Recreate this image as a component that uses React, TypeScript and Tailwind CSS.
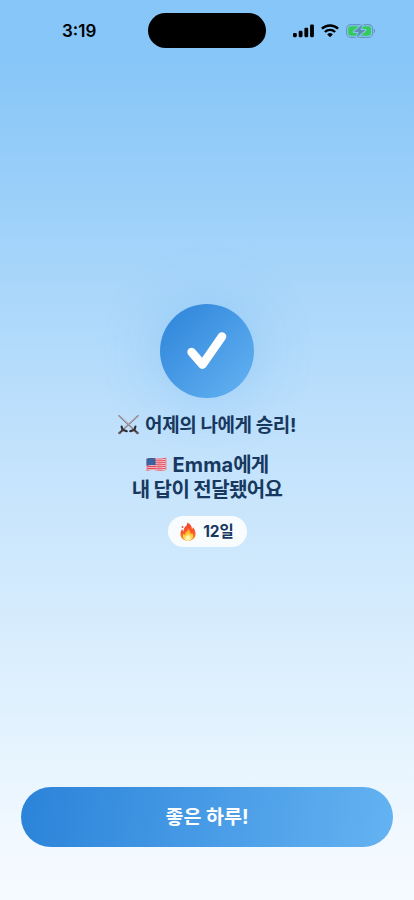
function SignalIcon() {
  return (
    <svg width="21" height="14" viewBox="0 0 21 14" fill="#000">
      <rect x="0" y="9" width="3.8" height="4.2" rx="1.1" />
      <rect x="5.7" y="6.8" width="3.8" height="6.4" rx="1.1" />
      <rect x="11.4" y="3.8" width="3.8" height="9.4" rx="1.1" />
      <rect x="17.1" y="0.4" width="3.8" height="12.8" rx="1.1" />
    </svg>
  );
}

function WifiIcon() {
  return (
    <svg width="18" height="14" viewBox="0 0 18 14" fill="none" stroke="#000">
      <path d="M.9 4.7a11.7 11.7 0 0 1 16.2 0" strokeWidth="2.5" />
      <path d="M3.9 8a7.3 7.3 0 0 1 10.2 0" strokeWidth="2.4" />
      <path d="M9 13.2 6.2 10.4a4 4 0 0 1 5.6 0Z" fill="#000" stroke="none" />
    </svg>
  );
}

function BatteryIcon() {
  return (
    <svg width="30" height="14" viewBox="0 0 30 14">
      <rect x="0.6" y="0.6" width="26" height="12.8" rx="4.2" fill="none" stroke="#6597c0" strokeWidth="1.1" />
      <path d="M27.8 4.8c1.8.6 1.8 3.8 0 4.4Z" fill="#6597c0" />
      <rect x="2.2" y="2.2" width="22.8" height="9.6" rx="2.7" fill="#34cb59" />
      <path
        d="M16.8 0 7.8 7.9h4.9L10.4 14l9-7.9h-4.9Z"
        fill="#5a8fb8"
        stroke="#83c3ef"
        strokeWidth="2.2"
        strokeLinejoin="round"
        paintOrder="stroke"
      />
    </svg>
  );
}

function SwordsIcon() {
  return (
    <svg width="21" height="20" viewBox="0 0 21 20" strokeLinecap="round">
      <path d="M1 .8 15.5 14.2M20 .8 5.5 14.2" stroke="#806f72" strokeWidth="1.5" />
      <path d="M1.2.8 15 13.3M19.8.8 6 13.3" stroke="#c9b8ba" strokeWidth=".7" />
      <path d="m3.6 11.6 1 3.2 4.2 1.4M17.4 11.6l-1 3.2-4.2 1.4" stroke="#2d2d33" strokeWidth="2.1" fill="none" />
      <path d="m5 14.8-3.5 3.2M16 14.8l3.5 3.2" stroke="#41383a" strokeWidth="2" />
      <circle cx="1.5" cy="18" r="1.2" fill="#6c5b56" />
      <circle cx="19.5" cy="18" r="1.2" fill="#6c5b56" />
    </svg>
  );
}

function FlagIcon() {
  return (
    <svg width="21" height="15" viewBox="0 0 21 15">
      <defs>
        <clipPath id="flag">
          <path d="M.5 1.8C4 .5 7 1.2 10.5 1.5S17 1.5 20.5.5V12.7c-3.5 1.3-6.5 1.3-10 .8S4 12.8.5 14.1Z" />
        </clipPath>
      </defs>
      <g clipPath="url(#flag)">
        <path d="M0 0h21v15H0Z" fill="#f4d3d9" />
        <g stroke="#e0495b" strokeWidth="1.15" fill="none">
          <path d="M0 2.1c4-1.3 7-.6 10.5-.3S17 1.8 21 .7" />
          <path d="M0 4.1c4-1.3 7-.6 10.5-.3S17 3.8 21 2.7" />
          <path d="M0 6.1c4-1.3 7-.6 10.5-.3S17 5.8 21 4.7" />
          <path d="M0 8.1c4-1.3 7-.6 10.5-.3S17 7.8 21 6.7" />
          <path d="M0 10.1c4-1.3 7-.6 10.5-.3S17 9.8 21 8.7" />
          <path d="M0 12.1c4-1.3 7-.6 10.5-.3S17 11.8 21 10.7" />
          <path d="M0 14.1c4-1.3 7-.6 10.5-.3S17 13.8 21 12.7" />
        </g>
        <path d="M0 0h9.5v8.2C6.5 7.8 3.5 7.7 0 8.8Z" fill="#345f9d" />
        <path d="M1.5 3.2h7M1.5 5.2h7M1.5 7h7" stroke="#6484b5" strokeWidth=".6" strokeDasharray=".7 1" />
      </g>
    </svg>
  );
}

function FlameIcon() {
  return (
    <svg width="16" height="19" viewBox="0 0 16 19">
      <defs>
        <linearGradient id="flame" x1="0" y1="0" x2="0" y2="1">
          <stop offset="0" stopColor="#f0452c" />
          <stop offset=".6" stopColor="#fb5b29" />
          <stop offset="1" stopColor="#ff9a27" />
        </linearGradient>
        <linearGradient id="flameInner" x1="0" y1="0" x2="0" y2="1">
          <stop offset="0" stopColor="#ff9d24" />
          <stop offset=".6" stopColor="#ffd33c" />
          <stop offset="1" stopColor="#fff29a" />
        </linearGradient>
      </defs>
      <path
        d="M7.2.5c3.3 1.4 4.8 4 4.7 6.8.7-.4 1-1.3.9-2.3 1.8 2 2.8 4.3 2.7 7.2-.1 4-3.2 6.5-7.5 6.500S.6 16.2.5 12.3C.4 10 1.300 8.4 2.3 7c.2 1.1.6 1.9 1.3 2.2C3.5 6.3 4.8 5.2 6.3 3.7 7.1 2.8 7.4 1.7 7.2.5Z"
        fill="url(#flame)"
      />
      <circle cx="2.5" cy="4.9" r="1" fill="#f3522e" />
      <path
        d="M8.8 6.3c.2 2.5 2.1 3.7 2.2 5.9.6-.3.9-.8 1-1.5 1.1 1.7 1.5 3.3.8 4.9-.8 1.9-2.6 2.9-4.8 2.9s-4.1-1.1-4.8-2.9c-.5-1.4-.2-2.9.5-4.1.3.8.8 1.3 1.5 1.4-.3-3 2.7-3.7 3.6-6.6Z"
        fill="url(#flameInner)"
      />
      <path d="M8.2 11.7c.2 1.7 2.3 2.4 2.3 4.3 0 1.5-1.1 2.4-2.5 2.4S5.5 17.5 5.5 16c0-1.9 2.2-2.5 2.7-4.3Z" fill="#fff3ad" />
    </svg>
  );
}

function StatusBar() {
  return (
    <header className="flex h-[61px] shrink-0 items-center pl-[62px]">
      <span className="w-[86px] text-[17px] leading-5 font-semibold text-black">3:19</span>
      <div className="h-[35px] w-[118px] rounded-full bg-black" />
      <div className="ml-[27px] flex w-[83px] items-center justify-between">
        <SignalIcon />
        <WifiIcon />
        <BatteryIcon />
      </div>
    </header>
  );
}

export default function App() {
  return (
    <main className="flex h-[900px] w-full flex-col overflow-hidden bg-[linear-gradient(180deg,#87c6f8_0%,#87c6f8_7%,#c2e2fc_50%,#e6f4fe_84%,#f1f8ff_92%,#f4faff_100%)] font-['Inter','Noto_Sans_CJK_KR',sans-serif] text-[#17385f]">
      <StatusBar />

      <section className="flex flex-1 flex-col items-center pt-[242.5px]">
        <div className="flex size-[94px] items-center justify-center rounded-full bg-linear-to-br from-[#2b83d9] to-[#64b3f2] shadow-[0_0_60px_rgba(74,158,232,0.3)]">
          <svg width="94" height="94" viewBox="0 0 94 94" fill="none">
            <path d="M31.6 48.1 42.5 60.600 62 32.500" stroke="#fff" strokeWidth="8.6" strokeLinecap="round" strokeLinejoin="round" />
          </svg>
        </div>

        <div className="mt-[15.5px] flex h-6 items-center gap-[6px]">
          <SwordsIcon />
          <p className="pt-[2px] text-[19px] leading-6 font-bold tracking-[-0.4px] whitespace-nowrap">어제의 나에게 승리!</p>
        </div>

        <h1 className="mt-[15.5px] flex flex-col items-center text-[20px] leading-6 font-bold whitespace-nowrap">
          <span className="flex items-center gap-[6px]">
            <FlagIcon />
            <span>
              <span className="tracking-[0.1px]">Emma</span>
              <span className="tracking-[-0.8px]">에게</span>
            </span>
          </span>
          <span className="pt-px tracking-[-0.6px]">내 답이 전달됐어요</span>
        </h1>

        <div className="mt-[14px] flex h-[31.5px] w-[79px] items-center justify-center gap-[7px] rounded-full bg-[#f8fcff]">
          <FlameIcon />
          <span className="pt-[2px] text-[15.5px] leading-5 font-bold">12일</span>
        </div>
      </section>

      <footer className="px-[21px] pb-[53px]">
        <button className="h-[60.5px] w-full rounded-full bg-[linear-gradient(100deg,#2b83d9,#64b3f2)] pt-px text-[19.5px] font-bold text-white">
          좋은 하루!
        </button>
      </footer>
    </main>
  );
}
